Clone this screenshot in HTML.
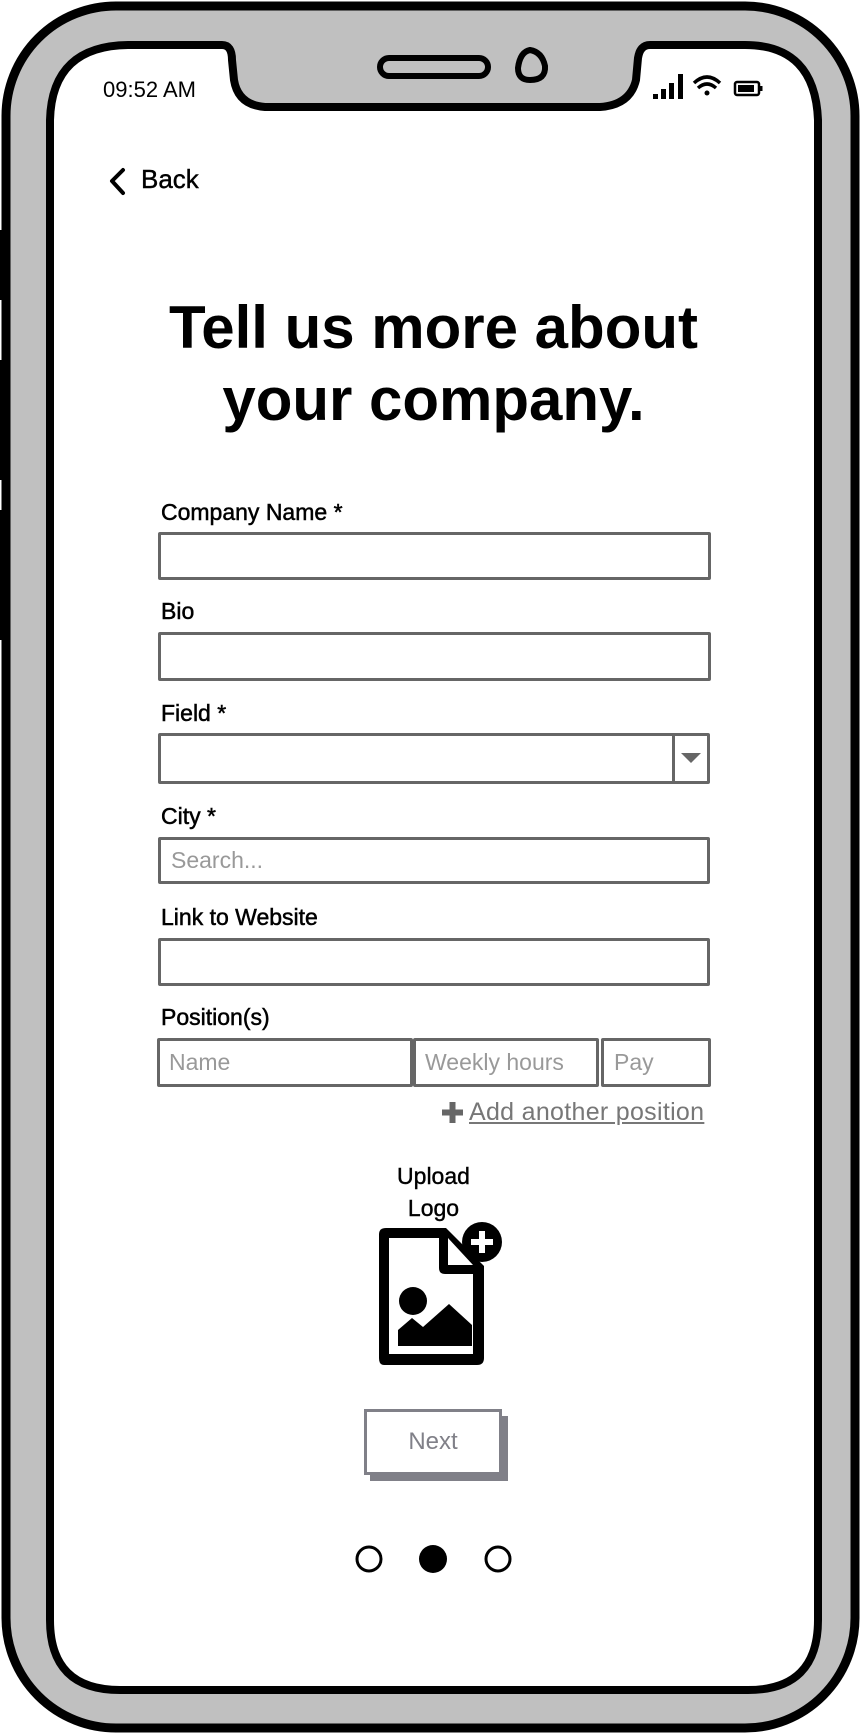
<!DOCTYPE html>
<html><head><meta charset="utf-8"><style>
*{margin:0;padding:0;box-sizing:border-box}
body{width:861px;height:1734px;background:#fff;position:relative;overflow:hidden;font-family:"Liberation Sans",sans-serif;color:#000}
.abs{position:absolute}
.lbl{position:absolute;left:161px;font-size:23px;line-height:26px;-webkit-text-stroke:0.5px #000}
.inp{position:absolute;border:3.5px solid #666;background:#fff;border-radius:2px}
.ph{position:absolute;color:#999;font-size:23px;line-height:26px}
</style></head><body>
<svg class="abs" style="left:0;top:0" width="861" height="1734">
 <rect x="6" y="6" width="849" height="1722" rx="110" fill="#c0c0c0" stroke="#000" stroke-width="9"/>
 <rect x="0" y="230" width="8" height="70" fill="#000"/>
 <rect x="0" y="360" width="8" height="120" fill="#000"/>
 <rect x="0" y="510" width="8" height="130" fill="#000"/>
 <path d="M130 45 L222 45 Q232 45 232 60 L234 80 Q238 105 265 107 L600 107 Q630 105 636 80 L638 58 Q640 45 650 45 L745 45 Q815 45 818 120 L818 1620 Q818 1690 748 1690 L120 1690 Q50 1690 50 1620 L50 120 Q52 45 130 45 Z" fill="#fff" stroke="#000" stroke-width="8"/>
 <rect x="380" y="58" width="108" height="18" rx="9" fill="none" stroke="#000" stroke-width="6"/>
 <path d="M530 50 Q520 52 518 68 Q518 80 530 80 Q546 80 545 66 Q542 52 530 50 Z" fill="none" stroke="#000" stroke-width="6"/>
 <g fill="#000">
  <rect x="653" y="94" width="5" height="5"/><rect x="661" y="89" width="5" height="10"/><rect x="669" y="83" width="5" height="16"/><rect x="678" y="74" width="5" height="25"/>
 </g>
 <path d="M694 83 Q707 71 720 83" fill="none" stroke="#000" stroke-width="3.5"/>
 <path d="M698 88 Q707 80 716 88" fill="none" stroke="#000" stroke-width="3.5"/>
 <circle cx="707" cy="93" r="2.5" fill="#000"/>
 <rect x="735" y="82" width="24" height="13" rx="2" fill="none" stroke="#000" stroke-width="2.5"/>
 <rect x="738" y="85" width="16" height="7" fill="#000"/>
 <rect x="760" y="86" width="2.5" height="5" fill="#000"/>
 <path d="M123 170 L112 181 L123 193" fill="none" stroke="#000" stroke-width="4" stroke-linecap="round" stroke-linejoin="round"/>
</svg>
<div class="abs" style="left:103px;top:77px;font-size:22px">09:52 AM</div>
<div class="abs" style="left:141px;top:164px;font-size:26px;-webkit-text-stroke:0.4px #000">Back</div>
<div class="abs" style="left:0;width:867px;top:292px;text-align:center;font-size:60px;line-height:72px;font-weight:bold">Tell us more about<br>your company.</div>

<div class="lbl" style="top:499px">Company Name *</div>
<div class="inp" style="left:158px;top:532px;width:553px;height:48px"></div>
<div class="lbl" style="top:598px">Bio</div>
<div class="inp" style="left:158px;top:632px;width:553px;height:49px"></div>
<div class="lbl" style="top:700px">Field *</div>
<div class="inp" style="left:158px;top:733px;width:552px;height:51px"></div>
<div class="abs" style="left:672px;top:735px;width:3px;height:47px;background:#666"></div>
<svg class="abs" style="left:680px;top:752px" width="22" height="12"><path d="M1 1 L21 1 L11 11 Z" fill="#666"/></svg>
<div class="lbl" style="top:803px">City *</div>
<div class="inp" style="left:158px;top:837px;width:552px;height:47px"></div>
<div class="ph" style="left:171px;top:847px">Search...</div>
<div class="lbl" style="top:904px">Link to Website</div>
<div class="inp" style="left:158px;top:938px;width:552px;height:48px"></div>
<div class="lbl" style="top:1004px">Position(s)</div>
<div class="inp" style="left:157px;top:1038px;width:256px;height:49px"></div>
<div class="inp" style="left:413px;top:1038px;width:186px;height:49px"></div>
<div class="inp" style="left:601px;top:1038px;width:110px;height:49px"></div>
<div class="ph" style="left:169px;top:1049px">Name</div>
<div class="ph" style="left:425px;top:1049px">Weekly hours</div>
<div class="ph" style="left:614px;top:1049px">Pay</div>
<svg class="abs" style="left:440px;top:1100px" width="25" height="25"><path d="M12.5 2 V23 M2 12.5 H23" stroke="#666" stroke-width="6"/></svg>
<div class="abs" style="left:469px;top:1098px;font-size:25px;color:#777;text-decoration:underline;letter-spacing:0.3px">Add another position</div>
<div class="abs" style="left:0;width:867px;top:1160px;text-align:center;font-size:23px;line-height:32px;-webkit-text-stroke:0.4px #000">Upload<br>Logo</div>
<svg class="abs" style="left:376px;top:1218px" width="130" height="150">
 <path d="M10 10 L70 10 L108 48 L108 140 Q108 147 101 147 L8 147 Q3 147 3 140 L3 16 Q3 10 10 10 Z" fill="#000"/>
 <path d="M13 20 L63 20 L63 50 Q63 56 69 56 L97 56 L97 136 L13 136 Z" fill="#fff"/>
 <path d="M72 20 L72 47 L97 47 Z" fill="#fff"/>
 <circle cx="37" cy="83" r="14" fill="#000"/>
 <path d="M22 112 L36 100 L47 109 L73 86 L96 107 L96 128 L22 128 Z" fill="#000"/>
 <circle cx="106" cy="24" r="20" fill="#000"/>
 <path d="M106 13 V35 M95 24 H117" stroke="#fff" stroke-width="6"/>
</svg>
<div class="abs" style="left:370px;top:1416px;width:138px;height:65px;background:#808088"></div>
<div class="abs" style="left:364px;top:1409px;width:138px;height:66px;background:#fff;border:3.5px solid #808088;text-align:center;line-height:60px;font-size:24px;color:#808088">Next</div>
<svg class="abs" style="left:340px;top:1540px" width="190" height="40">
 <circle cx="29" cy="19" r="12" fill="#fff" stroke="#000" stroke-width="3"/>
 <circle cx="93" cy="19" r="14" fill="#000"/>
 <circle cx="158" cy="19" r="12" fill="#fff" stroke="#000" stroke-width="3"/>
</svg>
</body></html>
